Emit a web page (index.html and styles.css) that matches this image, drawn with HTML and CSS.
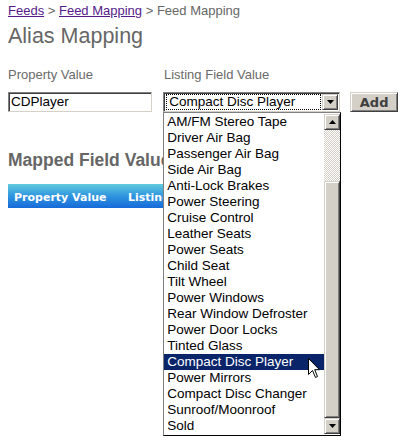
FILE: index.html
```html
<!DOCTYPE html>
<html>
<head>
<meta charset="utf-8">
<link rel="stylesheet" href="styles.css">
</head>
<body>
<div class="crumbs"><a href="#">Feeds</a> &gt; <a href="#">Feed Mapping</a> &gt; Feed Mapping</div>
<h1 class="title">Alias Mapping</h1>
<div class="labels">
  <div class="label label-prop">Property Value</div>
  <div class="label">Listing Field Value</div>
</div>
<div class="controls">
  <div class="textbox">CDPlayer</div>
  <div class="select">
    <div class="select-value"><span class="focus">Compact Disc Player</span></div>
    <div class="btn3d arrow-btn"><svg width="7" height="4" viewBox="0 0 7 4"><polygon points="0,0 7,0 3.5,4" fill="#000"/></svg></div>
    <div class="listbox">
      <div class="items">
        <div class="item">AM/FM Stereo Tape</div>
        <div class="item">Driver Air Bag</div>
        <div class="item">Passenger Air Bag</div>
        <div class="item">Side Air Bag</div>
        <div class="item">Anti-Lock Brakes</div>
        <div class="item">Power Steering</div>
        <div class="item">Cruise Control</div>
        <div class="item">Leather Seats</div>
        <div class="item">Power Seats</div>
        <div class="item">Child Seat</div>
        <div class="item">Tilt Wheel</div>
        <div class="item">Power Windows</div>
        <div class="item">Rear Window Defroster</div>
        <div class="item">Power Door Locks</div>
        <div class="item">Tinted Glass</div>
        <div class="item selected">Compact Disc Player</div>
        <div class="item">Power Mirrors</div>
        <div class="item">Compact Disc Changer</div>
        <div class="item">Sunroof/Moonroof</div>
        <div class="item">Sold</div>
      </div>
      <div class="scrollbar">
        <div class="btn3d arrow-btn"><svg width="7" height="4" viewBox="0 0 7 4"><polygon points="3.5,0 7,4 0,4" fill="#000"/></svg></div>
        <div class="track"></div>
        <div class="btn3d thumb"></div>
        <div class="btn3d arrow-btn"><svg width="7" height="4" viewBox="0 0 7 4"><polygon points="0,0 7,0 3.5,4" fill="#000"/></svg></div>
      </div>
    </div>
  </div>
  <div class="btn3d add-btn">Add</div>
</div>
<div class="subtitle-clip"><h2 class="subtitle">Mapped Field Values</h2></div>
<div class="bar">
  <div class="col col-prop">Property Value</div>
  <div class="col">Listing Field Value</div>
</div>
<svg class="cursor" width="13" height="21" viewBox="0 0 13 21"><path d="M0.5 0.5 L0.5 16.5 L4.5 12.5 L7.5 19.5 L9.5 18.5 L6.7 11.7 L11.5 11.7 Z" fill="#fff" stroke="#000" stroke-width="1" stroke-linejoin="miter"/></svg>
</body>
</html>
```

FILE: styles.css
```css
html, body {
  margin: 0;
  padding: 0;
  background: #fff;
}
body {
  position: relative;
  padding: 3px 8px 0;
  font-family: "Liberation Sans", Arial, sans-serif;
  color: #666;
  width: 406px;
  height: 441px;
  box-sizing: border-box;
  overflow: hidden;
}
.crumbs {
  font-size: 13px;
  line-height: 16px;
  color: #666;
}
.crumbs a {
  color: #551a8b;
  text-decoration: underline;
}
.title {
  margin: 5px 0 0;
  font-size: 21.5px;
  line-height: 24px;
  font-weight: normal;
  color: #666;
}
.labels {
  display: flex;
  margin-top: 19px;
  font-size: 13px;
  line-height: 16px;
  color: #6a6a6a;
}
.label-prop {
  width: 156px;
}
.controls {
  display: flex;
  margin-top: 9px;
  height: 20px;
  font-size: 13.5px;
  color: #000;
}
.textbox {
  box-sizing: border-box;
  width: 145px;
  height: 20px;
  margin-right: 11px;
  border: 1px solid;
  border-color: #808080 #d4d0c8 #d4d0c8 #808080;
  box-shadow: inset 1px 1px #404040, inset -1px -1px #fff;
  padding: 1px 2px;
  line-height: 16px;
  background: #fff;
}
.select {
  position: relative;
  box-sizing: border-box;
  width: 178px;
  height: 20px;
  margin-right: 10px;
  border: 1px solid;
  border-color: #808080 #d4d0c8 #d4d0c8 #808080;
  box-shadow: inset 1px 1px #404040, inset -1px -1px #fff;
  padding: 1px;
  display: flex;
  background: #fff;
}
.select-value {
  flex: 1;
  padding: 0 1px;
  display: flex;
}
.focus {
  flex: 1;
  box-sizing: border-box;
  border: 1px dotted #000;
  padding: 0 0 0 2px;
  line-height: 14px;
  white-space: nowrap;
}
.btn3d {
  box-sizing: border-box;
  background: #d4d0c8;
  border: 1px solid;
  border-color: #d4d0c8 #404040 #404040 #d4d0c8;
  box-shadow: inset 1px 1px #fff, inset -1px -1px #808080;
}
.arrow-btn {
  width: 16px;
  height: 16px;
  display: flex;
  align-items: center;
  justify-content: center;
}
.arrow-btn svg {
  display: block;
}
.add-btn {
  width: 48px;
  height: 20px;
  display: flex;
  align-items: center;
  justify-content: center;
  font-family: "DejaVu Sans", Verdana, sans-serif;
  font-weight: bold;
  font-size: 13px;
  color: #404040;
}
.listbox {
  position: absolute;
  left: -1px;
  top: 19px;
  width: 178px;
  box-sizing: border-box;
  border: 1px solid;
  border-color: #808080 #000 #000 #808080;
  background: #fff;
  display: flex;
  padding-top: 1px;
  padding-bottom: 1px;
  z-index: 5;
}
.items {
  flex: 1;
}
.item {
  height: 16px;
  line-height: 16px;
  padding-left: 3px;
  white-space: nowrap;
  color: #000;
}
.item.selected {
  background: #0a246a;
  color: #fff;
}
.scrollbar {
  width: 16px;
  display: flex;
  flex-direction: column;
}
.track {
  height: 51px;
  background: repeating-conic-gradient(#d4d0c8 0 25%, #fff 0 50%) 0 0 / 2px 2px;
}
.thumb {
  flex: 1;
}
.subtitle-clip {
  margin-top: 38px;
  width: 156px;
  overflow: hidden;
}
.subtitle {
  margin: 0;
  font-size: 17.5px;
  line-height: 20px;
  font-weight: bold;
  color: #666;
  white-space: nowrap;
}
.bar {
  margin-top: 14px;
  width: 156px;
  height: 24px;
  overflow: hidden;
  box-sizing: border-box;
  display: flex;
  padding: 3px 0 0 6px;
  background: linear-gradient(#62cbdc, #2f95e0 50%, #176ad9);
  font-family: "DejaVu Sans", Verdana, sans-serif;
  font-weight: bold;
  font-size: 11px;
  line-height: 21px;
  color: #fff;
  white-space: nowrap;
}
.col-prop {
  flex: 0 0 114px;
}
.col {
  flex-shrink: 0;
}
.cursor {
  position: absolute;
  left: 308px;
  top: 358px;
  z-index: 10;
}
```
